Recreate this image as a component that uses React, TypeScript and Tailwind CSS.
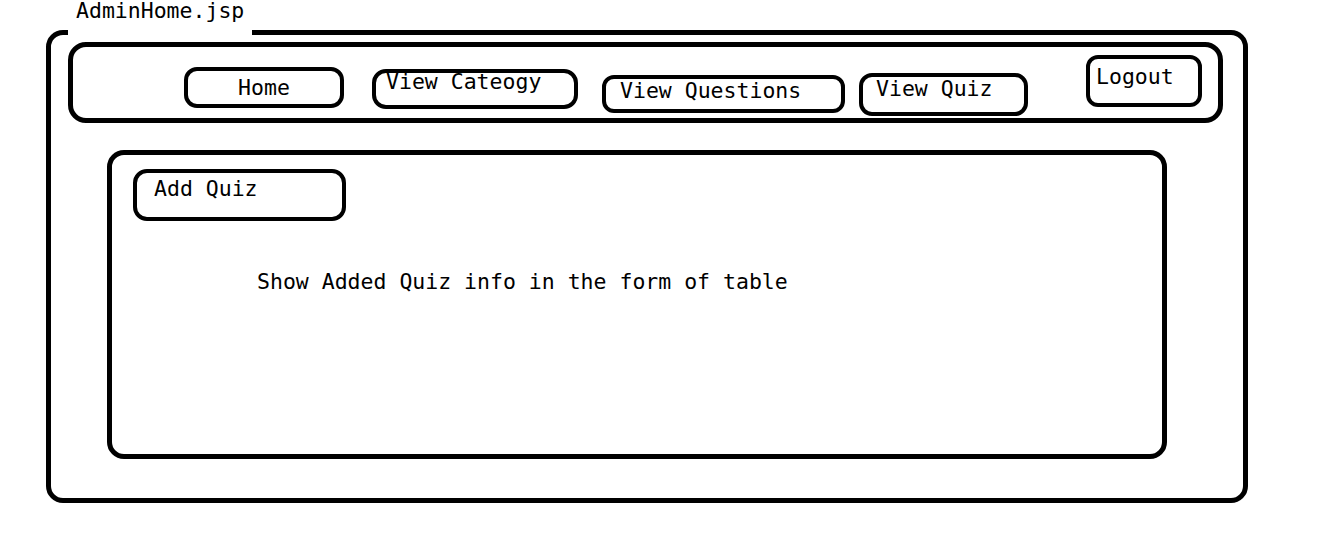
const font = { fontFamily: '"DejaVu Sans Mono", "Liberation Mono", monospace' };

type NavButton = {
  label: string;
  box: string;
  text: string;
};

const NAV_BUTTONS: NavButton[] = [
  { label: "Home", box: "ml-[111px] mt-[20px] w-[160px] h-[41px] rounded-[13px] flex items-center justify-center", text: "mt-[1px]" },
  { label: "View Cateogy", box: "ml-[28px] mt-[22px] w-[206px] h-[40px] rounded-[14px]", text: "-mt-[2px] pl-[10px]" },
  { label: "View Questions", box: "ml-[24px] mt-[28px] w-[243px] h-[38px] rounded-[12px]", text: "mt-[1px] pl-[14px]" },
  { label: "View Quiz", box: "ml-[14px] mt-[26px] w-[169px] h-[43px] rounded-[13px]", text: "mt-[1px] pl-[13px]" },
  { label: "Logout", box: "ml-[58px] mt-[8px] w-[116px] h-[52px] rounded-[12px]", text: "mt-[7px] pl-[6px]" },
];

export default function App() {
  return (
    <div className="w-[1325px] h-[535px] bg-white text-black overflow-hidden" style={font}>
      <div className="pt-[30px] pl-[46px]">
        {/* page frame */}
        <div className="relative w-[1202px] h-[473px] border-[5px] border-black rounded-[17px]">
          <div className="absolute left-[17px] top-[-35px] w-[184px] h-[38px] bg-white pl-[8px]">
            <div className="text-[21.5px] leading-[22px]">AdminHome.jsp</div>
          </div>

          {/* nav bar */}
          <div className="ml-[17px] mt-[7px] w-[1155px] h-[81px] border-[5px] border-black rounded-[18px] flex items-start">
            {NAV_BUTTONS.map((b) => (
              <div key={b.label} className={`border-[4px] border-black ${b.box}`}>
                <div className={`text-[21.5px] leading-[22px] whitespace-nowrap ${b.text}`}>{b.label}</div>
              </div>
            ))}
          </div>

          {/* content */}
          <div className="ml-[56px] mt-[27px] w-[1060px] h-[309px] border-[5px] border-black rounded-[17px]">
            <div className="ml-[21px] mt-[14px] w-[213px] h-[52px] border-[4px] border-black rounded-[14px] pl-[17px]">
              <div className="mt-[5px] text-[21.5px] leading-[22px]">Add Quiz</div>
            </div>
            <div className="ml-[145px] mt-[50px] text-[21.5px] leading-[22px]">
              Show Added Quiz info in the form of table
            </div>
          </div>
        </div>
      </div>
    </div>
  );
}
